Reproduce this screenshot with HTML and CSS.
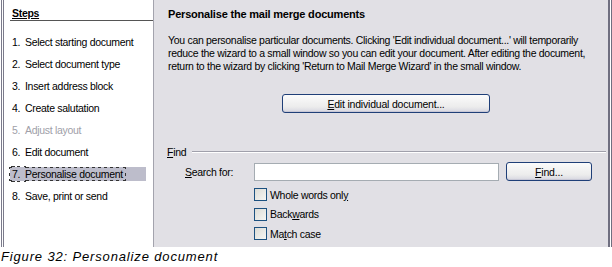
FILE: index.html
```html
<!DOCTYPE html>
<html lang="en">
<head>
    <meta charset="UTF-8">
    <title>Mail Merge Wizard - Personalise document</title>
    <link rel="stylesheet" href="styles.css">
</head>
<body>

<div class="frame">
    <!-- Steps list -->
    <div class="steps">
        <div class="steps-title">Steps</div>
        <ol class="step-list">
            <li><span class="num">1.</span>Select starting document</li>
            <li><span class="num">2.</span>Select document type</li>
            <li><span class="num">3.</span>Insert address block</li>
            <li><span class="num">4.</span>Create salutation</li>
            <li class="disabled"><span class="num">5.</span>Adjust layout</li>
            <li><span class="num">6.</span>Edit document</li>
            <li class="current"><span class="focus"><span class="num">7.</span>Personalise document</span></li>
            <li><span class="num">8.</span>Save, print or send</li>
        </ol>
    </div>

    <!-- Page content -->
    <div class="page">
        <h3>Personalise the mail merge documents</h3>
        <p>You can personalise particular documents. Clicking 'Edit individual document...' will temporarily<br>
            reduce the wizard to a small window so you can edit your document. After editing the document,<br>
            return to the wizard by clicking 'Return to Mail Merge Wizard' in the small window.</p>

        <div class="edit-row">
            <button class="xp-btn edit-btn"><u>E</u>dit individual document...</button>
        </div>

        <div class="group-title"><span><u>F</u>ind</span></div>

        <div class="search-row">
            <label for="search"><u>S</u>earch for:</label>
            <input type="text" id="search">
            <button class="xp-btn find-btn"><u>F</u>ind...</button>
        </div>

        <div class="options">
            <label class="check"><span class="box"></span>Whole words onl<u>y</u></label>
            <label class="check"><span class="box"></span>Back<u>w</u>ards</label>
            <label class="check"><span class="box"></span>Ma<u>t</u>ch case</label>
        </div>
    </div>
</div>

<div class="caption">Figure 32: Personalize document</div>

</body>
</html>
```

FILE: styles.css
```css
body {
    margin: 0;
    padding: 0;
    background-color: #fff;
    font-family: "Liberation Sans", Arial, sans-serif;
    font-size: 10.5px;
    letter-spacing: -0.3px;
    color: #000;
}
.frame {
    display: flex;
    height: 247px;
    margin-left: 1px;
    width: 611px;
    box-sizing: border-box;
    border-left: 3px double #7b7b8b;
    border-right: 1px solid #6f6f80;
    padding-right: 1px;
}

/* Steps panel */
.steps {
    width: 150px;
    flex-shrink: 0;
    background: #fff;
    border-right: 1px solid #a3a3ad;
    padding: 7px 0 0 6px;
    box-sizing: border-box;
}
.steps-title {
    font-weight: bold;
    padding-left: 2px;
    padding-bottom: 1px;
    border-bottom: 1px solid #555;
    text-decoration: underline;
}
.step-list {
    list-style: none;
    margin: 10px 0 0 0;
    padding: 0;
}
.step-list li {
    height: 22px;
    line-height: 22px;
    padding-left: 2px;
    white-space: nowrap;
}
.step-list .num {
    display: inline-block;
    width: 13px;
}
.step-list .disabled {
    color: #a0a0a8;
}
.step-list .current {
    background: #bdbdcb;
    height: 14px;
    line-height: 14px;
    margin: 4px 7px 4px 0;
    padding-left: 0;
}
.focus {
    outline: 1px dotted #333;
    padding: 0 2px 0 2px;
}

/* Page panel */
.page {
    flex: 1;
    background: #e1e0e5;
    border-right: 2px solid #6f6f80;
    padding: 8px 0 0 14px;
}
.page h3 {
    margin: 0;
    font-size: 11px;
    font-weight: bold;
    letter-spacing: -0.2px;
}
.page p {
    margin: 14px 0 0 0;
    line-height: 13px;
    white-space: nowrap;
}
.edit-row {
    margin: 21px 0 0 114px;
}
.xp-btn {
    font-family: "Liberation Sans", Arial, sans-serif;
    font-size: 10.5px;
    letter-spacing: -0.2px;
    color: #000;
    height: 19px;
    padding: 0;
    border: 1px solid #1f3f78;
    border-radius: 3px;
    background: linear-gradient(#fbfbfb, #ececec 70%, #d6d6e0);
    box-shadow: inset 0 -1px 0 #c8c8d6;
}
.edit-btn {
    width: 208px;
}
.group-title {
    display: flex;
    align-items: center;
    margin: 33px 0 0 -1px;
}
.group-title span {
    padding-right: 6px;
}
.group-title::after {
    content: "";
    flex: 1;
    height: 0;
    border-top: 1px solid #a0a0ab;
    border-bottom: 1px solid #fff;
    margin-right: 2px;
}
.search-row {
    display: flex;
    align-items: center;
    margin: 4px 0 0 17px;
}
.search-row label {
    width: 69px;
}
.search-row input {
    width: 245px;
    height: 18px;
    box-sizing: border-box;
    border: 1px solid #a5acb2;
    background: #fff;
    margin: 0;
}
.find-btn {
    width: 86px;
    margin-left: 7px;
}
.options {
    margin: 4px 0 0 86px;
}
.check {
    display: flex;
    align-items: center;
    height: 19.5px;
}
.box {
    width: 11px;
    height: 11px;
    border: 1px solid #1c5180;
    background: linear-gradient(135deg, #dcdcd6, #f6f6f4);
    margin-right: 3px;
}
.caption {
    font-style: italic;
    font-size: 13px;
    letter-spacing: 0.85px;
    padding: 2px 0 0 1px;
}
```
